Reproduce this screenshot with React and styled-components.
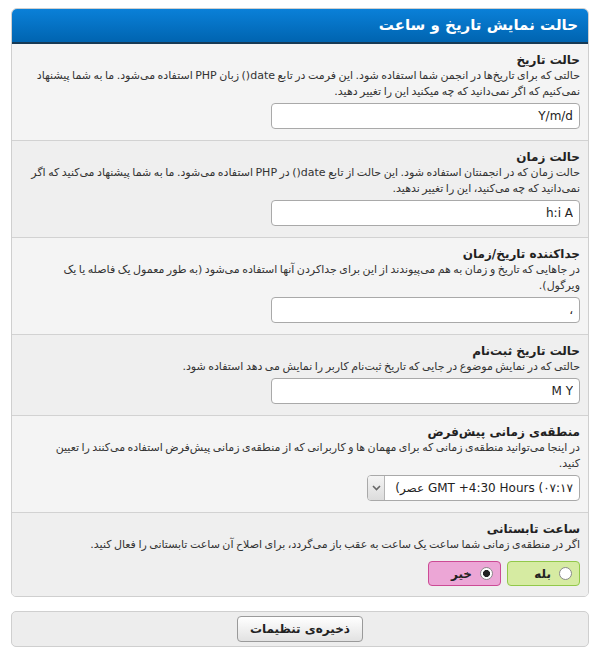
import React from "react";
import styled, { createGlobalStyle } from "styled-components";

const GlobalStyle = createGlobalStyle`
  html, body {
    margin: 0;
    padding: 0;
    background: #ffffff;
  }
  body {
    font-family: "DejaVu Sans", "Noto Sans", sans-serif;
    color: #333;
  }
`;

const settings = [
  {
    title: "حالت تاریخ",
    desc: "حالتی که برای تاریخ‌ها در انجمن شما استفاده شود. این فرمت در تابع date() زبان PHP استفاده می‌شود. ما به شما پیشنهاد نمی‌کنیم که اگر نمی‌دانید که چه میکنید این را تغییر دهید.",
    value: "Y/m/d",
  },
  {
    title: "حالت زمان",
    desc: "حالت زمان که در انجمنتان استفاده شود. این حالت از تابع date() در PHP استفاده می‌شود. ما به شما پیشنهاد می‌کنید که اگر نمی‌دانید که چه می‌کنید، این را تغییر ندهید.",
    value: "h:i A",
  },
  {
    title: "جداکننده تاریخ/زمان",
    desc: "در جاهایی که تاریخ و زمان به هم می‌پیوندند از این برای جداکردن آنها استفاده می‌شود (به طور معمول یک فاصله یا یک ویرگول).",
    value: "،",
  },
  {
    title: "حالت تاریخ ثبت‌نام",
    desc: "حالتی که در نمایش موضوع در جایی که تاریخ ثبت‌نام کاربر را نمایش می دهد استفاده شود.",
    value: "M Y",
  },
];

export default function App() {
  return (
    <Page dir="rtl">
      <GlobalStyle />
      <Panel>
        <Header>حالت نمایش تاریخ و ساعت</Header>
        {settings.map((s, i) => (
          <Row key={s.title} $alt={i % 2 === 1}>
            <Title>{s.title}</Title>
            <Desc>{s.desc}</Desc>
            <TextInput defaultValue={s.value} dir="ltr" />
          </Row>
        ))}
        <Row>
          <Title>منطقه‌ی زمانی پیش‌فرض</Title>
          <Desc>
            در اینجا می‌توانید منطقه‌ی زمانی که برای مهمان ها و کاربرانی که از
            منطقه‌ی زمانی پیش‌فرض استفاده می‌کنند را تعیین
            <br />
            کنید.
          </Desc>
          <FakeSelect>
            <SelectText dir="ltr">
              {"(\u200Eعصر\u200E GMT +4:30 Hours (۰۷:۱۷"}
            </SelectText>
            <ArrowBox>
              <svg width="9" height="6" viewBox="0 0 9 6">
                <path d="M1 1l3.5 3.5L8 1" fill="none" stroke="#666" strokeWidth="1.6" />
              </svg>
            </ArrowBox>
          </FakeSelect>
        </Row>
        <Row $alt $last>
          <Title>ساعت تابستانی</Title>
          <Desc>
            اگر در منطقه‌ی زمانی شما ساعت یک ساعت به عقب باز می‌گردد، برای اصلاح آن
            ساعت تابستانی را فعال کنید.
          </Desc>
          <Radios>
            <RadioLabel $tone="yes">
              <Dot />
              بله
            </RadioLabel>
            <RadioLabel $tone="no">
              <Dot $checked />
              خیر
            </RadioLabel>
          </Radios>
        </Row>
      </Panel>
      <SaveBar>
        <SaveButton type="button">ذخیره‌ی تنظیمات</SaveButton>
      </SaveBar>
    </Page>
  );
}

const Page = styled.div`
  padding: 8px 11px 8px 11px;
  width: 578px;
`;

const Panel = styled.div`
  border: 1px solid #cfcfcf;
  border-radius: 6px 6px 5px 5px;
  overflow: hidden;
  background: #f4f4f4;
`;

const Header = styled.div`
  height: 33px;
  line-height: 33px;
  padding: 0 10px;
  color: #fff;
  font-weight: bold;
  font-size: 15px;
  background: linear-gradient(to bottom, #0a80d8, #0064b0);
  border-bottom: 2px solid #173a55;
`;

const Row = styled.div`
  padding: 8px 8px 11px 8px;
  background: ${(p) => (p.$alt ? "#efefef" : "#f4f4f4")};
  border-bottom: ${(p) => (p.$last ? "none" : "1px solid #d2d2d2")};
  padding-bottom: ${(p) => (p.$last ? "10px" : "11px")};
`;

const Title = styled.div`
  font-weight: bold;
  font-size: 12px;
  line-height: 16px;
  color: #222;
`;

const Desc = styled.div`
  font-size: 11px;
  line-height: 16px;
  word-spacing: -1px;
  color: #333;
  margin-bottom: 3px;
`;

const TextInput = styled.input`
  display: block;
  box-sizing: border-box;
  width: 309px;
  height: 26px;
  border: 1px solid #a9a9a9;
  border-radius: 4px;
  background: #fff;
  padding: 0 6px;
  font-family: "DejaVu Sans", sans-serif;
  font-size: 12px;
  color: #222;
  text-align: right;
  outline: none;
`;

const FakeSelect = styled.div`
  display: flex;
  box-sizing: border-box;
  width: 213px;
  height: 26px;
  border: 1px solid #a9a9a9;
  border-radius: 4px;
  background: #fff;
  overflow: hidden;
`;

const SelectText = styled.div`
  flex: 1;
  text-align: right;
  padding: 0 6px;
  font-size: 12px;
  line-height: 24px;
  color: #222;
  white-space: nowrap;
`;

const ArrowBox = styled.div`
  width: 16px;
  display: flex;
  align-items: center;
  justify-content: center;
  background: linear-gradient(to bottom, #f4f4f4, #dcdcdc);
  border-right: 1px solid #b5b5b5;
`;

const Radios = styled.div`
  display: flex;
  gap: 6px;
  margin-top: 8px;
`;

const tones = {
  yes: { bg: "#d6eba2", border: "#92c84a" },
  no: { bg: "#eca6d6", border: "#cc4a95" },
};

const RadioLabel = styled.label`
  box-sizing: border-box;
  width: 73px;
  height: 25px;
  display: flex;
  align-items: center;
  gap: 8px;
  padding-right: 7px;
  border-radius: 4px;
  border: 1px solid ${(p) => tones[p.$tone].border};
  background: ${(p) => tones[p.$tone].bg};
  font-weight: bold;
  font-size: 12px;
  color: #222;
`;

const Dot = styled.span`
  box-sizing: border-box;
  width: 13px;
  height: 13px;
  border-radius: 50%;
  border: 1px solid #8a8a8a;
  background: ${(p) =>
    p.$checked
      ? "radial-gradient(circle, #222 0 3.2px, #fff 3.8px)"
      : "#fff"};
`;

const SaveBar = styled.div`
  margin-top: 14px;
  height: 36px;
  box-sizing: border-box;
  border: 1px solid #cfcfcf;
  border-radius: 5px;
  background: #ededed;
  display: flex;
  align-items: center;
  justify-content: center;
`;

const SaveButton = styled.button`
  width: 126px;
  height: 26px;
  border: 1px solid #9a9a9a;
  border-radius: 4px;
  background: linear-gradient(to bottom, #ffffff, #e2e2e2);
  font-family: "DejaVu Sans", sans-serif;
  font-weight: bold;
  font-size: 12px;
  color: #222;
`;
